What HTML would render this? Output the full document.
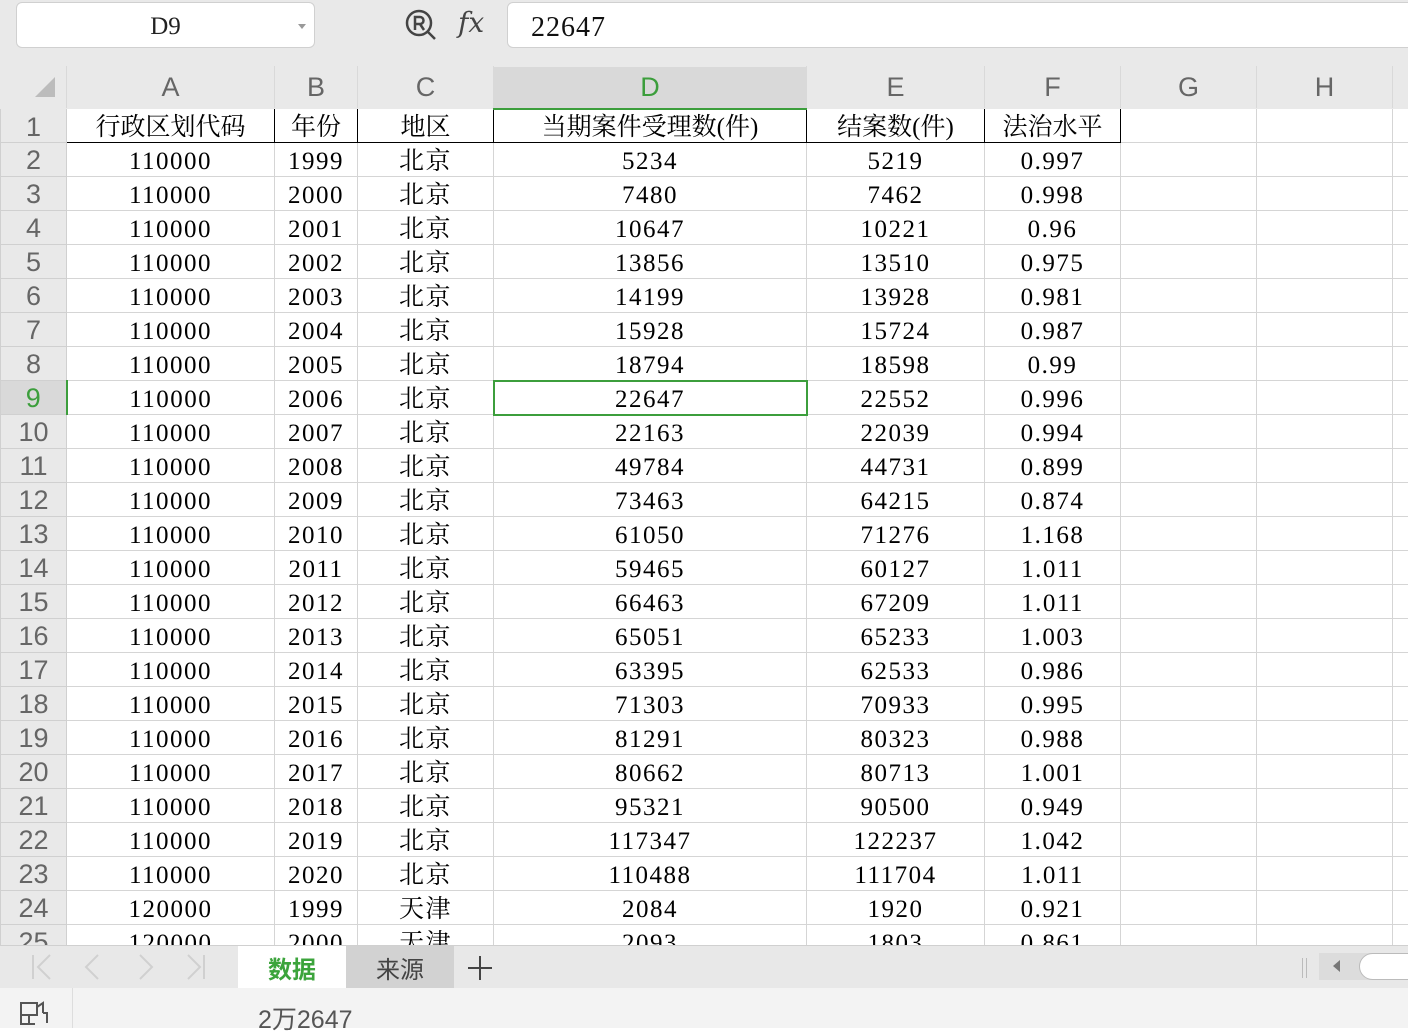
<!DOCTYPE html>
<html><head><meta charset="utf-8"><style>
*{margin:0;padding:0;box-sizing:border-box}
body{width:1408px;height:1028px;overflow:hidden;background:#fff;position:relative;font-family:"Liberation Serif","Noto Serif CJK SC",serif}
#top{position:absolute;left:0;top:0;width:1408px;height:66px;background:#e9e9e9}
#name{position:absolute;left:16px;top:2px;width:299px;height:46px;background:#fff;border:1px solid #d0d0d0;border-radius:6px;font-size:25px;text-align:center;line-height:48px;color:#222}
#name:after{content:"";position:absolute;right:8px;top:21px;border:4px solid transparent;border-top:5px solid #999}
#fx{position:absolute;left:458px;top:6px;font-family:"DejaVu Serif",serif;font-style:italic;font-size:28px;color:#444}
#fbar{position:absolute;left:507px;top:2px;width:920px;height:46px;background:#fff;border:1px solid #d0d0d0;border-radius:6px;font-size:28px;line-height:50px;padding-left:23px;color:#111;letter-spacing:1px}
table{position:absolute;left:0;top:66px;border-collapse:collapse;table-layout:fixed;width:1430px}
td{border:1px solid #d5d5d5;height:34px;text-align:center;font-size:25px;color:#000;white-space:nowrap;overflow:hidden;padding-top:4px;line-height:29px;letter-spacing:1.5px}
td.h{background:#e9e9e9;color:#666;font-family:"Liberation Sans","Noto Sans CJK SC",sans-serif;font-size:27px;padding:0;line-height:30px;border-color:#d0d0d0;letter-spacing:0}
tr.ch td{height:42px;background:#e9e9e9;color:#666;font-family:"Liberation Sans",sans-serif;font-size:27px;border-color:#e9e9e9;border-right:1px solid #d9d9d9;padding-top:0;letter-spacing:0}
tr.r1 td.c{border:1px solid #000;letter-spacing:0}
tr.r1 td{padding-top:3px}
#sel{position:absolute;left:493px;top:380px;width:315px;height:36px;border:2px solid #3c9e3c}
#tabs{position:absolute;left:0;top:945px;width:1408px;height:43px;background:#e8e8e8;border-top:1px solid #d0d0d0}
#status{position:absolute;left:0;top:988px;width:1408px;height:40px;background:#f3f3f3}
</style></head><body>
<div id="top">
<div id="name">D9</div>
<svg style="position:absolute;left:404px;top:8px" width="36" height="34" viewBox="0 0 36 34"><circle cx="15" cy="15" r="12" fill="none" stroke="#444" stroke-width="2.5"/><path d="M11 22V9h5a3.5 3.5 0 0 1 0 7h-5M16 16l4 6M23 23l8 8" fill="none" stroke="#444" stroke-width="2.5"/></svg>
<div id="fx">fx</div>
<div id="fbar">22647</div>
</div>
<table>
<colgroup><col style="width:66px"><col style="width:208px"><col style="width:83px"><col style="width:136px"><col style="width:313px"><col style="width:178px"><col style="width:136px"><col style="width:136px"><col style="width:136px"><col style="width:38px"></colgroup>
<tr class="ch"><td style="position:relative"><span style="position:absolute;left:34px;top:10px;border-left:20px solid transparent;border-bottom:20px solid #bcbcbc"></span></td><td>A</td><td>B</td><td>C</td><td style="background:#d9d9d9;color:#3c9e3c;border-bottom:2px solid #3c9e3c">D</td><td>E</td><td>F</td><td>G</td><td>H</td><td></td></tr>
<tr class="r1"><td class="h">1</td><td class="c">行政区划代码</td><td class="c">年份</td><td class="c">地区</td><td class="c">当期案件受理数(件)</td><td class="c">结案数(件)</td><td class="c">法治水平</td><td></td><td></td><td></td></tr>
<tr><td class="h">2</td><td>110000</td><td>1999</td><td>北京</td><td>5234</td><td>5219</td><td>0.997</td><td></td><td></td><td></td></tr>
<tr><td class="h">3</td><td>110000</td><td>2000</td><td>北京</td><td>7480</td><td>7462</td><td>0.998</td><td></td><td></td><td></td></tr>
<tr><td class="h">4</td><td>110000</td><td>2001</td><td>北京</td><td>10647</td><td>10221</td><td>0.96</td><td></td><td></td><td></td></tr>
<tr><td class="h">5</td><td>110000</td><td>2002</td><td>北京</td><td>13856</td><td>13510</td><td>0.975</td><td></td><td></td><td></td></tr>
<tr><td class="h">6</td><td>110000</td><td>2003</td><td>北京</td><td>14199</td><td>13928</td><td>0.981</td><td></td><td></td><td></td></tr>
<tr><td class="h">7</td><td>110000</td><td>2004</td><td>北京</td><td>15928</td><td>15724</td><td>0.987</td><td></td><td></td><td></td></tr>
<tr><td class="h">8</td><td>110000</td><td>2005</td><td>北京</td><td>18794</td><td>18598</td><td>0.99</td><td></td><td></td><td></td></tr>
<tr><td class="h" style="background:#d9d9d9;color:#3c9e3c;border-right:2px solid #3c9e3c">9</td><td>110000</td><td>2006</td><td>北京</td><td>22647</td><td>22552</td><td>0.996</td><td></td><td></td><td></td></tr>
<tr><td class="h">10</td><td>110000</td><td>2007</td><td>北京</td><td>22163</td><td>22039</td><td>0.994</td><td></td><td></td><td></td></tr>
<tr><td class="h">11</td><td>110000</td><td>2008</td><td>北京</td><td>49784</td><td>44731</td><td>0.899</td><td></td><td></td><td></td></tr>
<tr><td class="h">12</td><td>110000</td><td>2009</td><td>北京</td><td>73463</td><td>64215</td><td>0.874</td><td></td><td></td><td></td></tr>
<tr><td class="h">13</td><td>110000</td><td>2010</td><td>北京</td><td>61050</td><td>71276</td><td>1.168</td><td></td><td></td><td></td></tr>
<tr><td class="h">14</td><td>110000</td><td>2011</td><td>北京</td><td>59465</td><td>60127</td><td>1.011</td><td></td><td></td><td></td></tr>
<tr><td class="h">15</td><td>110000</td><td>2012</td><td>北京</td><td>66463</td><td>67209</td><td>1.011</td><td></td><td></td><td></td></tr>
<tr><td class="h">16</td><td>110000</td><td>2013</td><td>北京</td><td>65051</td><td>65233</td><td>1.003</td><td></td><td></td><td></td></tr>
<tr><td class="h">17</td><td>110000</td><td>2014</td><td>北京</td><td>63395</td><td>62533</td><td>0.986</td><td></td><td></td><td></td></tr>
<tr><td class="h">18</td><td>110000</td><td>2015</td><td>北京</td><td>71303</td><td>70933</td><td>0.995</td><td></td><td></td><td></td></tr>
<tr><td class="h">19</td><td>110000</td><td>2016</td><td>北京</td><td>81291</td><td>80323</td><td>0.988</td><td></td><td></td><td></td></tr>
<tr><td class="h">20</td><td>110000</td><td>2017</td><td>北京</td><td>80662</td><td>80713</td><td>1.001</td><td></td><td></td><td></td></tr>
<tr><td class="h">21</td><td>110000</td><td>2018</td><td>北京</td><td>95321</td><td>90500</td><td>0.949</td><td></td><td></td><td></td></tr>
<tr><td class="h">22</td><td>110000</td><td>2019</td><td>北京</td><td>117347</td><td>122237</td><td>1.042</td><td></td><td></td><td></td></tr>
<tr><td class="h">23</td><td>110000</td><td>2020</td><td>北京</td><td>110488</td><td>111704</td><td>1.011</td><td></td><td></td><td></td></tr>
<tr><td class="h">24</td><td>120000</td><td>1999</td><td>天津</td><td>2084</td><td>1920</td><td>0.921</td><td></td><td></td><td></td></tr>
<tr><td class="h">25</td><td>120000</td><td>2000</td><td>天津</td><td>2093</td><td>1803</td><td>0.861</td><td></td><td></td><td></td></tr>
</table>
<div id="sel"></div>
<div id="tabs">
<svg style="position:absolute;left:0;top:0" width="240" height="43"><g fill="none" stroke="#d0d0d0" stroke-width="2"><path d="M33 9v24M50 9L38 21l12 12M98 9L86 21l12 12M140 9l12 12-12 12M188 9l12 12-12 12M204 9v24"/></g></svg>
<div style="position:absolute;left:238px;top:0;width:108px;height:43px;background:#fff;color:#3ca43c;font-family:'Noto Sans CJK SC',sans-serif;font-weight:bold;font-size:24px;text-align:center;line-height:43px">数据</div>
<div style="position:absolute;left:346px;top:0;width:108px;height:43px;background:#d2d2d2;color:#444;font-family:'Noto Sans CJK SC',sans-serif;font-size:24px;text-align:center;line-height:43px">来源</div>
<svg style="position:absolute;left:466px;top:8px" width="28" height="28"><path d="M14 2v24M2 14h24" stroke="#444" stroke-width="2"/></svg>
<div style="position:absolute;left:1302px;top:12px;width:5px;height:20px;border-left:1px solid #bbb;border-right:1px solid #bbb"></div>
<div style="position:absolute;left:1319px;top:7px;width:100px;height:27px;background:#dcdcdc"></div>
<div style="position:absolute;left:1333px;top:14px;border:6px solid transparent;border-right:7px solid #777;border-left:0"></div>
<div style="position:absolute;left:1359px;top:7px;width:80px;height:27px;background:#fff;border:1px solid #bbb;border-radius:14px"></div>
</div>
<div id="status">
<div style="position:absolute;left:72px;top:0;width:1px;height:40px;background:#ddd"></div>
<svg style="position:absolute;left:18px;top:12px" width="36" height="28"><path d="M3 3h16v12H3zM19 7l6-4v10M3 15v10M11 15v10M3 24h14M25 13h4v10" fill="none" stroke="#555" stroke-width="2"/></svg>
<div style="position:absolute;left:258px;top:12px;font-family:'Liberation Sans','Noto Sans CJK SC',sans-serif;font-size:25px;color:#555">2万2647</div>
</div>
</body></html>
